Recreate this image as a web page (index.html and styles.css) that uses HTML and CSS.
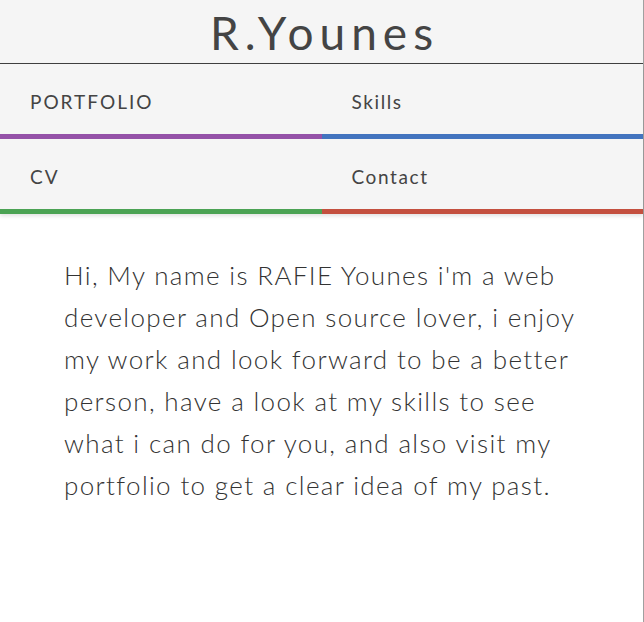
FILE: index.html
```html
<!DOCTYPE html>
<html lang="en">
<head>
<meta charset="utf-8">
<title>R.Younes</title>
<link rel="stylesheet" href="styles.css">
</head>
<body>
<div class="page">
  <header class="site-header">
    <h1 class="logo">R.Younes</h1>
  </header>
  <nav class="menu">
    <a class="menu-item purple upper" href="#">PORTFOLIO</a>
    <a class="menu-item blue" href="#">Skills</a>
    <a class="menu-item green upper" href="#">CV</a>
    <a class="menu-item red" href="#">Contact</a>
  </nav>
  <main class="intro">
    <p>Hi, My name is RAFIE Younes i'm a web<br>developer and Open source lover, i enjoy<br>my work and look forward to be a better<br>person, have a look at my skills to see<br>what i can do for you, and also visit my<br>portfolio to get a clear idea of my past.</p>
  </main>
</div>
</body>
</html>
```
FILE: styles.css
```css
html, body {
  margin: 0;
  padding: 0;
  background: #fff;
}
.page {
  box-sizing: border-box;
  min-height: 100vh;
  border-right: 1px solid #a0a0a0;
  font-family: Lato, "Open Sans", sans-serif;
  color: #444;
}
.site-header {
  background: #f5f5f5;
  height: 63px;
  border-bottom: 1px solid #404040;
  display: flex;
  align-items: center;
  justify-content: center;
}
.logo {
  margin: 0;
  font-weight: 400;
  font-size: 46px;
  letter-spacing: 6px;
  color: #444;
  line-height: 1;
  padding: 2px 0 0 6px;
}
.menu {
  display: grid;
  grid-template-columns: 1fr 1fr;
  background: #f5f5f5;
  box-shadow: 0 2px 4px rgba(0,0,0,0.12);
}
.menu-item {
  box-sizing: border-box;
  height: 75px;
  display: flex;
  align-items: center;
  padding: 4px 0 0 30px;
  font-size: 19px;
  font-weight: 400;
  letter-spacing: 1.6px;
  color: #444;
  text-decoration: none;
  border-bottom: 5px solid;
}
.menu-item.upper { letter-spacing: 2px; }
.purple { border-color: #9552a8; }
.blue { border-color: #4374bf; }
.green { border-color: #4ba354; }
.red { border-color: #c4503f; }
.intro {
  padding: 40px 0 0 64px;
}
.intro p {
  margin: 0;
  font-size: 26px;
  font-weight: 300;
  line-height: 42px;
  letter-spacing: 1.35px;
  color: #333;
}
```
